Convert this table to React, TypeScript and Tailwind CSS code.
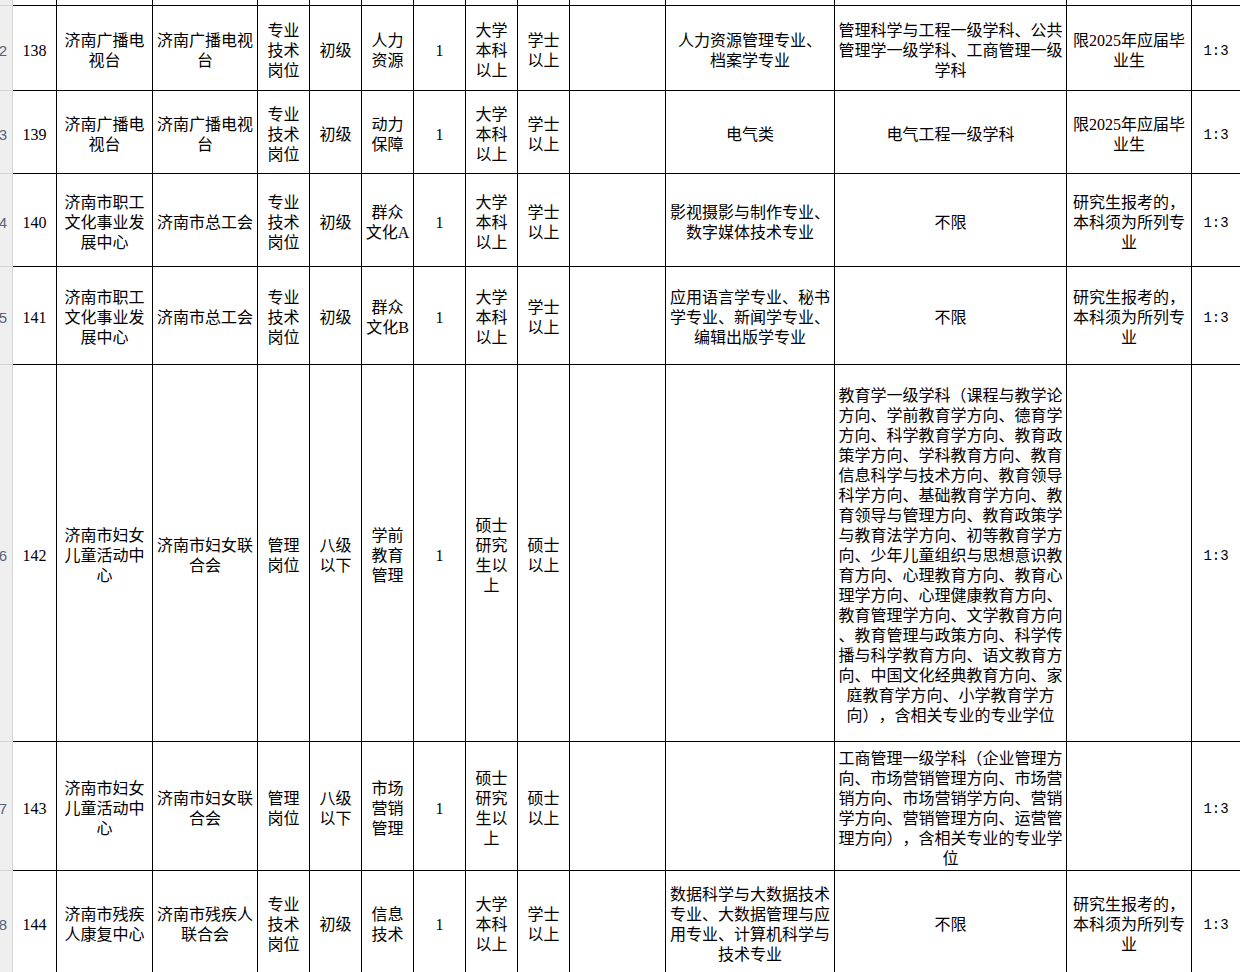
import React from 'react'

// column widths, line to line, after the row-number strip
const COLS = [
  'w-[44px]',
  'w-[96px]',
  'w-[105px]',
  'w-[52px]',
  'w-[52px]',
  'w-[52px]',
  'w-[52px]',
  'w-[52px]',
  'w-[52px]',
  'w-[96px]',
  'w-[169px]',
  'w-[232px]',
  'w-[125px]',
  'w-[48px]',
]

interface Row {
  h: string
  rn: string
  cells: string[]
}

const BIG_142 = [
  '教育学一级学科（课程与教学论',
  '方向、学前教育学方向、德育学',
  '方向、科学教育学方向、教育政',
  '策学方向、学科教育方向、教育',
  '信息科学与技术方向、教育领导',
  '科学方向、基础教育学方向、教',
  '育领导与管理方向、教育政策学',
  '与教育法学方向、初等教育学方',
  '向、少年儿童组织与思想意识教',
  '育方向、心理教育方向、教育心',
  '理学方向、心理健康教育方向、',
  '教育管理学方向、文学教育方向',
  '、教育管理与政策方向、科学传',
  '播与科学教育方向、语文教育方',
  '向、中国文化经典教育方向、家',
  '庭教育学方向、小学教育学方',
  '向），含相关专业的专业学位',
].join('|')

const BIG_143 = [
  '工商管理一级学科（企业管理方',
  '向、市场营销管理方向、市场营',
  '销方向、市场营销学方向、营销',
  '学方向、营销管理方向、运营管',
  '理方向），含相关专业的专业学',
  '位',
].join('|')

const rows: Row[] = [
  {
    h: 'h-[85px]',
    rn: '142',
    cells: [
      '138',
      '济南广播电|视台',
      '济南广播电视|台',
      '专业|技术|岗位',
      '初级',
      '人力|资源',
      '1',
      '大学|本科|以上',
      '学士|以上',
      '',
      '人力资源管理专业、|档案学专业',
      '管理科学与工程一级学科、公共|管理学一级学科、工商管理一级|学科',
      '限2025年应届毕|业生',
      '1:3',
    ],
  },
  {
    h: 'h-[83px]',
    rn: '143',
    cells: [
      '139',
      '济南广播电|视台',
      '济南广播电视|台',
      '专业|技术|岗位',
      '初级',
      '动力|保障',
      '1',
      '大学|本科|以上',
      '学士|以上',
      '',
      '电气类',
      '电气工程一级学科',
      '限2025年应届毕|业生',
      '1:3',
    ],
  },
  {
    h: 'h-[93px]',
    rn: '144',
    cells: [
      '140',
      '济南市职工|文化事业发|展中心',
      '济南市总工会',
      '专业|技术|岗位',
      '初级',
      '群众|文化A',
      '1',
      '大学|本科|以上',
      '学士|以上',
      '',
      '影视摄影与制作专业、|数字媒体技术专业',
      '不限',
      '研究生报考的，|本科须为所列专|业',
      '1:3',
    ],
  },
  {
    h: 'h-[98px]',
    rn: '145',
    cells: [
      '141',
      '济南市职工|文化事业发|展中心',
      '济南市总工会',
      '专业|技术|岗位',
      '初级',
      '群众|文化B',
      '1',
      '大学|本科|以上',
      '学士|以上',
      '',
      '应用语言学专业、秘书|学专业、新闻学专业、|编辑出版学专业',
      '不限',
      '研究生报考的，|本科须为所列专|业',
      '1:3',
    ],
  },
  {
    h: 'h-[377px]',
    rn: '146',
    cells: [
      '142',
      '济南市妇女|儿童活动中|心',
      '济南市妇女联|合会',
      '管理|岗位',
      '八级|以下',
      '学前|教育|管理',
      '1',
      '硕士|研究|生以|上',
      '硕士|以上',
      '',
      '',
      BIG_142,
      '',
      '1:3',
    ],
  },
  {
    h: 'h-[129px]',
    rn: '147',
    cells: [
      '143',
      '济南市妇女|儿童活动中|心',
      '济南市妇女联|合会',
      '管理|岗位',
      '八级|以下',
      '市场|营销|管理',
      '1',
      '硕士|研究|生以|上',
      '硕士|以上',
      '',
      '',
      BIG_143,
      '',
      '1:3',
    ],
  },
  {
    h: 'h-[104px]',
    rn: '148',
    cells: [
      '144',
      '济南市残疾|人康复中心',
      '济南市残疾人|联合会',
      '专业|技术|岗位',
      '初级',
      '信息|技术',
      '1',
      '大学|本科|以上',
      '学士|以上',
      '',
      '数据科学与大数据技术|专业、大数据管理与应|用专业、计算机科学与|技术专业',
      '不限',
      '研究生报考的，|本科须为所列专|业',
      '1:3',
    ],
  },
]

function RowHeader({ label }: { label: string }) {
  return (
    <div className="w-[13px] shrink-0 h-full flex items-center justify-end overflow-hidden pr-[5px] pt-[5px] bg-[#efefef] border-r border-b border-[#d4d4d4] text-[15px] text-[#56627a] font-['Liberation_Sans',sans-serif] whitespace-nowrap">
      {label}
    </div>
  )
}

function Cell({ w, text, last }: { w: string; text: string; last: boolean }) {
  return (
    <div
      className={`${w} shrink-0 h-full flex flex-col items-center justify-center text-center pt-[5px] border-b border-black ${last ? "font-['Liberation_Mono',monospace] text-[14px]" : 'border-r'}`}
    >
      {text !== '' &&
        text.split('|').map((line, i) => (
          <span key={i} className="block whitespace-nowrap leading-[20px]">
            {line}
          </span>
        ))}
    </div>
  )
}

export default function App() {
  return (
    <div className="w-[1240px] h-[972px] overflow-hidden bg-white text-black text-[16px] leading-[20px] [text-spacing-trim:space-all] font-['Liberation_Serif','Noto_Sans_CJK_SC',serif]">
      {/* partial row cut off at the top */}
      <div className="flex h-[6px]">
        <div className="w-[13px] shrink-0 h-full bg-[#efefef] border-r border-b border-[#d4d4d4]" />
        {COLS.map((w, i) => (
          <div
            key={i}
            className={`${w} shrink-0 h-full border-b border-black ${i === COLS.length - 1 ? '' : 'border-r'}`}
          />
        ))}
      </div>

      {rows.map((row) => (
        <div key={row.rn} className={`flex ${row.h}`}>
          <RowHeader label={row.rn} />
          {row.cells.map((text, i) => (
            <Cell key={i} w={COLS[i]} text={text} last={i === COLS.length - 1} />
          ))}
        </div>
      ))}
    </div>
  )
}
